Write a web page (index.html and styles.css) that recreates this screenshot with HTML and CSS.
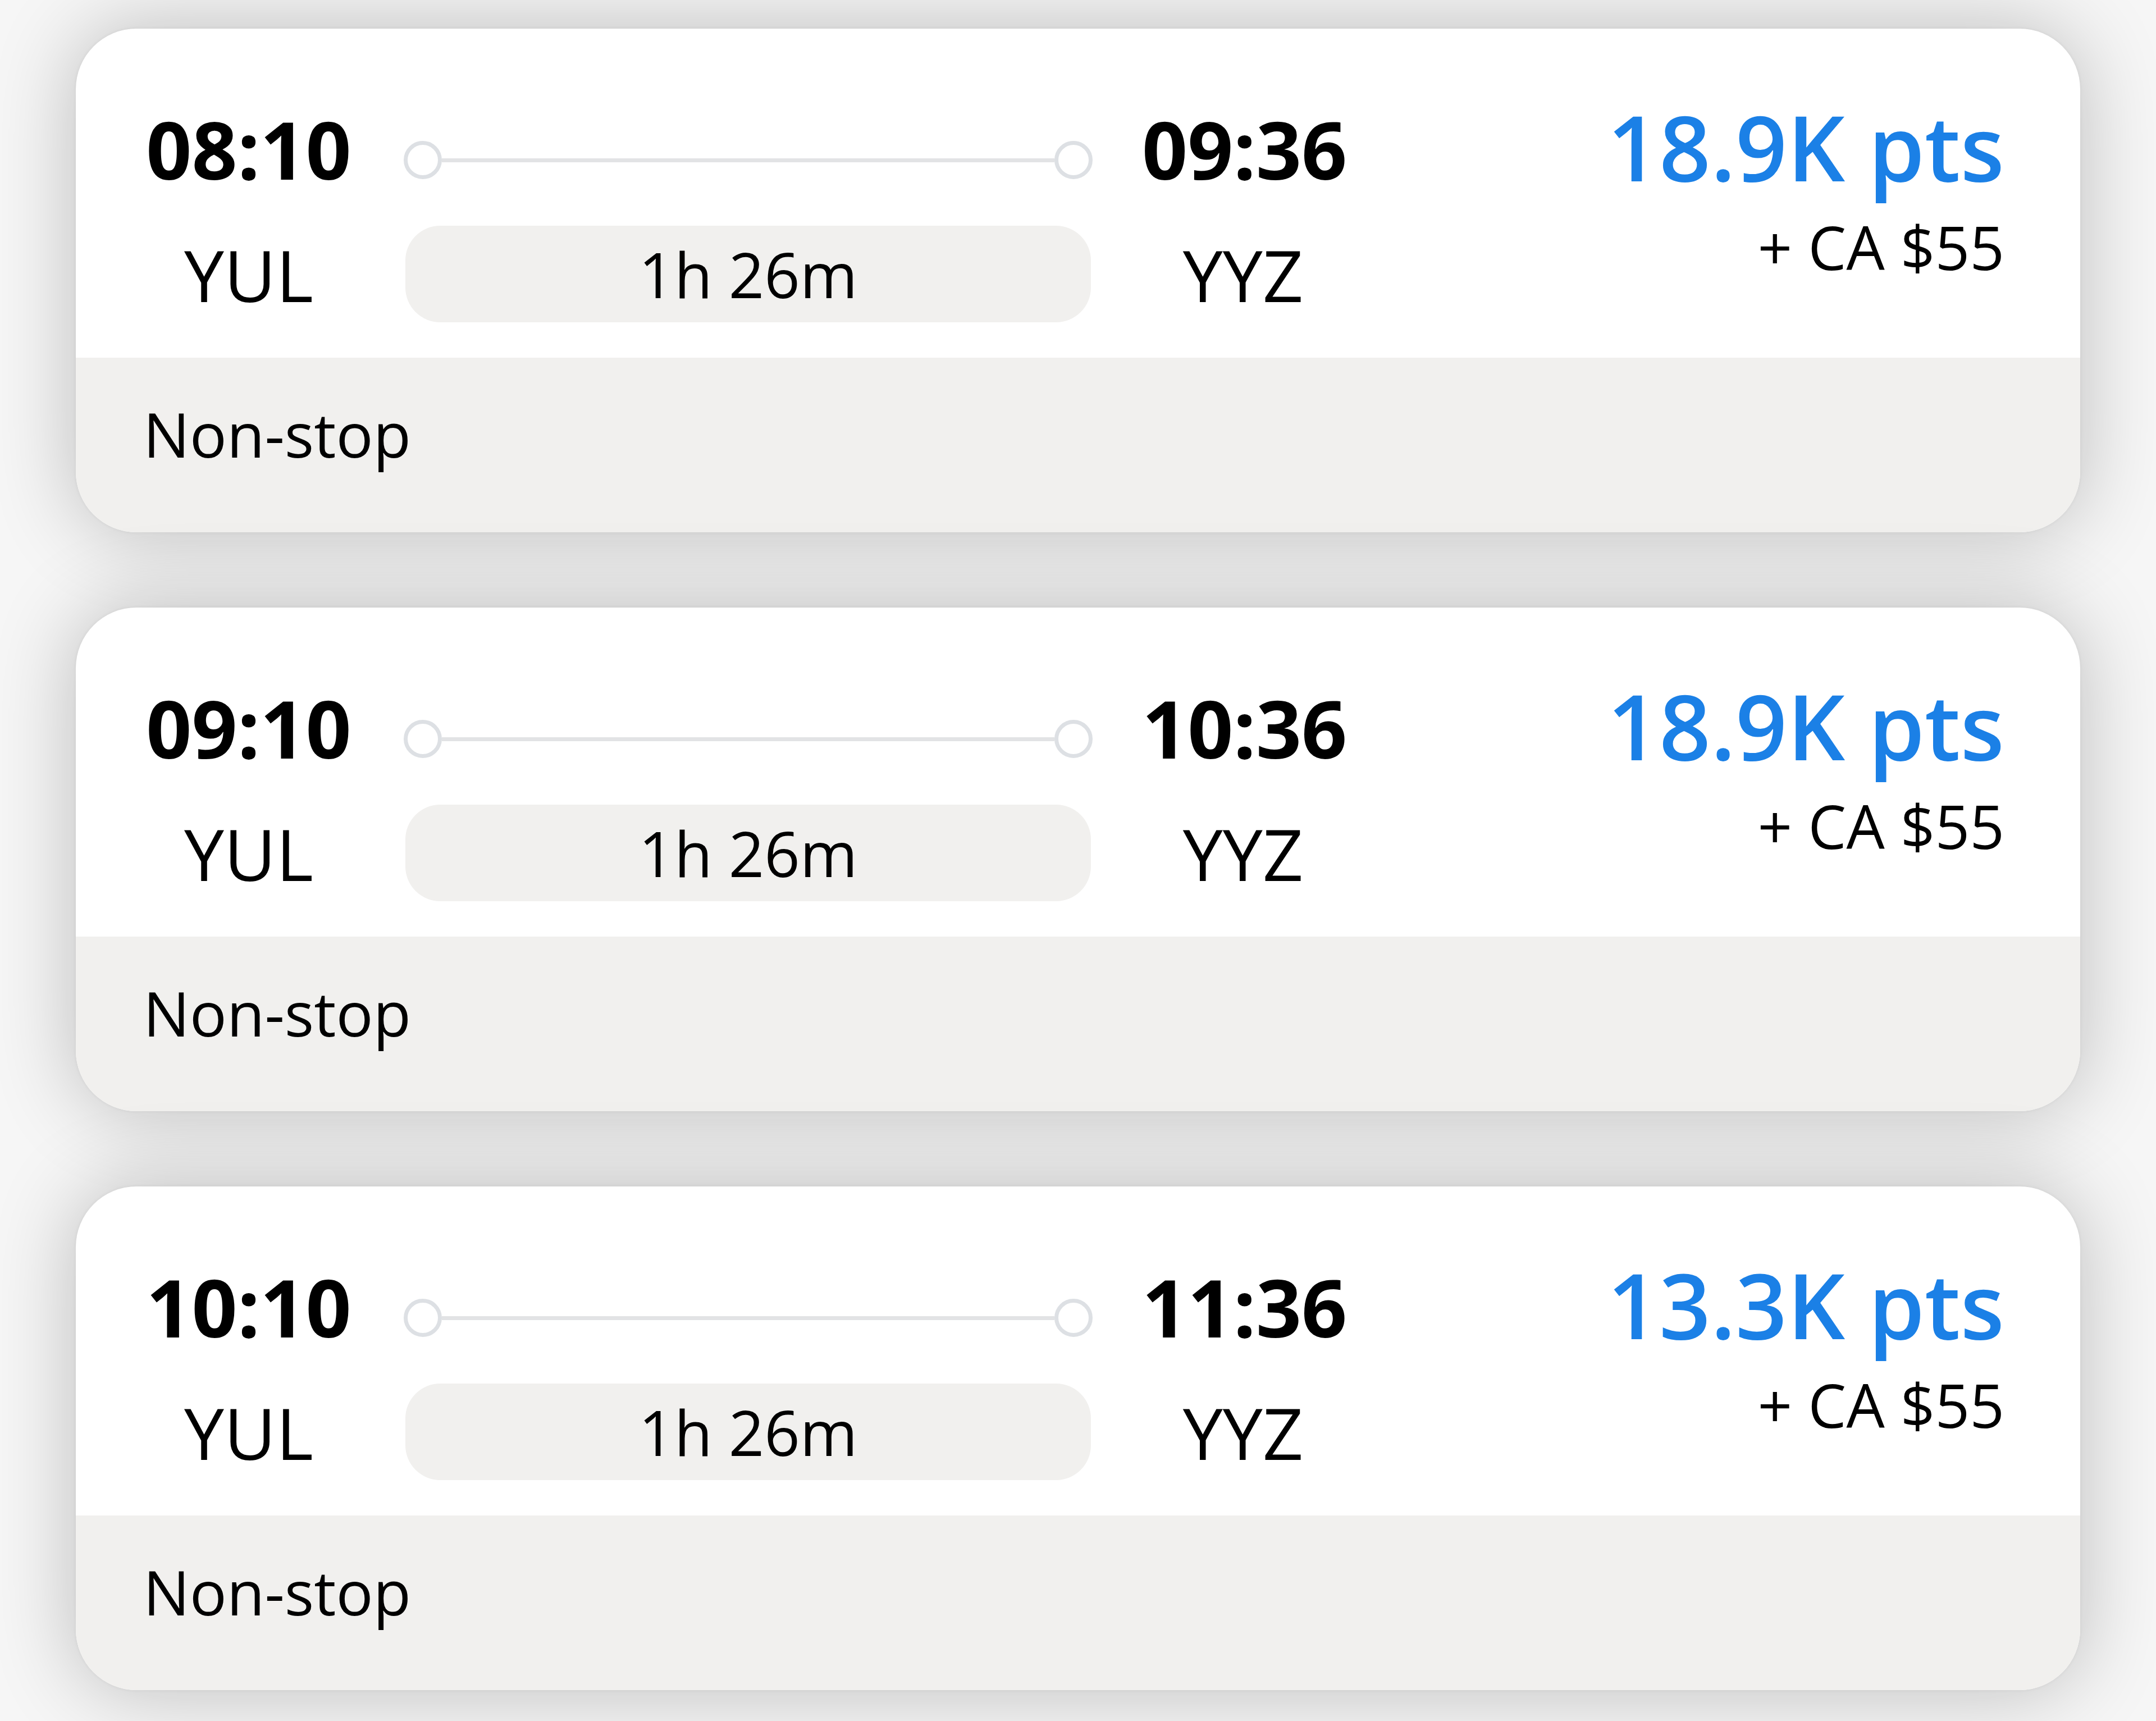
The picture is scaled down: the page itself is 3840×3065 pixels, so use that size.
FILE: index.html
```html
<!DOCTYPE html>
<html lang="en">
<head>
    <meta charset="UTF-8">
    <meta name="viewport" content="width=device-width, initial-scale=1.0">
    <title>Flight Results</title>
    <link rel="stylesheet" href="styles.css">
</head>
<body>
    <div class="results">
        <article class="flight">
            <div class="flight-main">
                <div class="leg">
                    <span class="time">08:10</span>
                    <div class="track"><span class="dot"></span><span class="rail"></span><span class="dot"></span></div>
                    <span class="time">09:36</span>
                    <span class="code">YUL</span>
                    <span class="duration">1h 26m</span>
                    <span class="code">YYZ</span>
                </div>
                <div class="price">
                    <div class="points">18.9K pts</div>
                    <div class="cash">+ CA $55</div>
                </div>
            </div>
            <div class="flight-foot">Non-stop</div>
        </article>

        <article class="flight">
            <div class="flight-main">
                <div class="leg">
                    <span class="time">09:10</span>
                    <div class="track"><span class="dot"></span><span class="rail"></span><span class="dot"></span></div>
                    <span class="time">10:36</span>
                    <span class="code">YUL</span>
                    <span class="duration">1h 26m</span>
                    <span class="code">YYZ</span>
                </div>
                <div class="price">
                    <div class="points">18.9K pts</div>
                    <div class="cash">+ CA $55</div>
                </div>
            </div>
            <div class="flight-foot">Non-stop</div>
        </article>

        <article class="flight">
            <div class="flight-main">
                <div class="leg">
                    <span class="time">10:10</span>
                    <div class="track"><span class="dot"></span><span class="rail"></span><span class="dot"></span></div>
                    <span class="time">11:36</span>
                    <span class="code">YUL</span>
                    <span class="duration">1h 26m</span>
                    <span class="code">YYZ</span>
                </div>
                <div class="price">
                    <div class="points">13.3K pts</div>
                    <div class="cash">+ CA $55</div>
                </div>
            </div>
            <div class="flight-foot">Non-stop</div>
        </article>
    </div>
</body>
</html>
```

FILE: styles.css
```css
body {
    font-family: "Open Sans", "Noto Sans", sans-serif;
    background-color: #f6f6f6;
    color: #000;
    margin: 0;
}
.results {
    display: flex;
    flex-direction: column;
    gap: 134px;
    padding: 51px 135px 55px;
}
.flight {
    background-color: #fff;
    border-radius: 108px;
    overflow: hidden;
    box-shadow: 0 0 6px rgba(0, 0, 0, 0.06), 0 0 150px rgba(0, 0, 0, 0.24);
}
.flight-main {
    display: flex;
    align-items: flex-start;
    padding: 129px 135px 63px 120px;
}
.leg {
    display: grid;
    grid-template-columns: 376px 1227px 360px;
    grid-template-rows: 145px 172px;
    column-gap: 88px;
    row-gap: 64px;
    align-items: center;
    margin-top: 13px;
}
.time {
    font-size: 142px;
    font-weight: 700;
    line-height: 145px;
    text-align: center;
}
.track {
    display: flex;
    align-items: center;
    align-self: end;
    height: 68px;
    margin-bottom: 19px;
}
.dot {
    width: 68px;
    height: 68px;
    box-sizing: border-box;
    border: 7px solid #dde0e4;
    border-radius: 50%;
    flex-shrink: 0;
}
.rail {
    flex: 1;
    height: 7px;
    background-color: #e2e3e5;
}
.code {
    font-size: 127px;
    line-height: 1;
    text-align: center;
}
.duration {
    height: 172px;
    margin: 0 3px;
    border-radius: 62px;
    background-color: #f1f0ee;
    font-size: 111px;
    line-height: 172px;
    text-align: center;
}
.price {
    margin-left: auto;
    text-align: right;
}
.points {
    font-size: 161px;
    font-weight: 600;
    line-height: 1;
    color: #1b80e6;
}
.cash {
    font-size: 108px;
    line-height: 1;
    margin-top: 45px;
}
.flight-foot {
    background-color: #f1f0ee;
    font-size: 110px;
    line-height: 1;
    padding: 80px 120px 121px;
}
```
